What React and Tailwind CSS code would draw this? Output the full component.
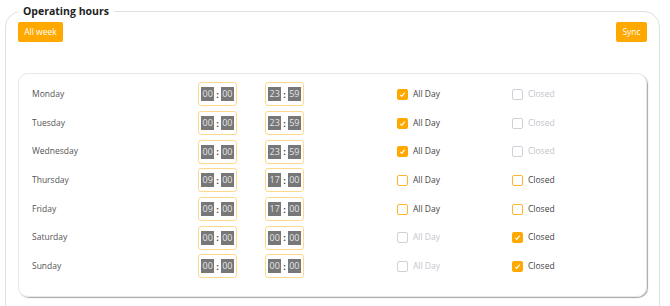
const days = [
  { name: 'Monday', from: ['00', '00'], to: ['23', '59'], allDay: 'on', closed: 'off-dis' },
  { name: 'Tuesday', from: ['00', '00'], to: ['23', '59'], allDay: 'on', closed: 'off-dis' },
  { name: 'Wednesday', from: ['00', '00'], to: ['23', '59'], allDay: 'on', closed: 'off-dis' },
  { name: 'Thursday', from: ['09', '00'], to: ['17', '00'], allDay: 'off', closed: 'off' },
  { name: 'Friday', from: ['09', '00'], to: ['17', '00'], allDay: 'off', closed: 'off' },
  { name: 'Saturday', from: ['00', '00'], to: ['00', '00'], allDay: 'off-dis', closed: 'on' },
  { name: 'Sunday', from: ['00', '00'], to: ['00', '00'], allDay: 'off-dis', closed: 'on' },
];

function TimeBox({ value }) {
  return (
    <div className="w-[39px] h-[24px] border border-[#ffd88c] rounded-[3px] flex items-center justify-center gap-[2px]">
      <span className="w-[13px] h-[14px] bg-[#777] text-[#e6e6e6] text-[9px] leading-[14px] text-center">{value[0]}</span>
      <span className="text-[9px] leading-none text-[#444] font-bold">:</span>
      <span className="w-[13px] h-[14px] bg-[#777] text-[#e6e6e6] text-[9px] leading-[14px] text-center">{value[1]}</span>
    </div>
  );
}

function Check({ state, label }) {
  const on = state === 'on';
  const dis = state === 'off-dis';
  return (
    <div className="flex items-center gap-[5px]">
      <span
        className={`w-[11px] h-[11px] rounded-[2px] flex items-center justify-center ${
          on ? 'bg-[#ffa800]' : dis ? 'border border-[#cfd0d8] bg-white' : 'border border-[#ffb52e] bg-white'
        }`}
      >
        {on && (
          <svg width="7" height="7" viewBox="0 0 8 8">
            <path d="M1.5 4.5 L3.2 6.2 L6.5 1.8" stroke="#fff" strokeWidth="1.3" fill="none" />
          </svg>
        )}
      </span>
      <span className={`text-[8.5px] ${dis ? 'text-[#c4c5cc]' : 'text-[#444]'}`}>{label}</span>
    </div>
  );
}

export default function App() {
  return (
    <div className="w-[670px] h-[306px] bg-white pt-[4px] overflow-hidden" style={{ fontFamily: '"Open Sans", "Noto Sans", sans-serif' }}>
      <fieldset className="ml-[5px] w-[655px] h-[320px] border border-[#e0e0e0] rounded-[16px] px-3">
        <legend className="px-[5px] text-[10.5px] font-bold text-[#222] leading-[14px]">Operating hours</legend>

        <div className="flex justify-between mt-[4px]">
          <button className="h-[20px] w-[45px] bg-[#ffa800] text-white text-[8.5px] rounded-[2px]">All week</button>
          <button className="h-[20px] w-[31px] bg-[#ffa800] text-white text-[8.5px] rounded-[2px]">Sync</button>
        </div>

        <div className="mt-[31px] h-[224px] rounded-[10px] border border-[#e8e8e8] shadow-[1px_1px_1px_rgba(0,0,0,0.35)] pt-[6px] pl-[13px]">
          {days.map((d) => (
            <div key={d.name} className="grid grid-cols-[166px_67px_132px_115px_1fr] items-center h-[28.7px]">
              <span className="text-[8.5px] text-[#555]">{d.name}</span>
              <TimeBox value={d.from} />
              <TimeBox value={d.to} />
              <Check state={d.allDay} label="All Day" />
              <Check state={d.closed} label="Closed" />
            </div>
          ))}
        </div>
      </fieldset>
    </div>
  );
}
